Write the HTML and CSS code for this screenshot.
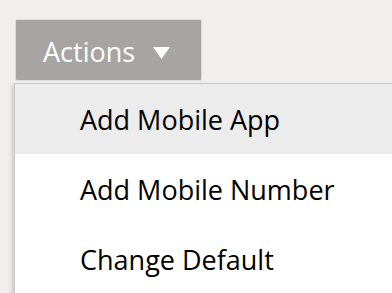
FILE: index.html
```html
<!DOCTYPE html>
<html lang="en">
<head>
    <meta charset="UTF-8">
    <meta name="viewport" content="width=device-width, initial-scale=1.0">
    <title>Actions</title>
    <link rel="stylesheet" href="styles.css">
</head>
<body>

<div class="dropdown">
    <button class="actions-btn">
        Actions
        <svg class="caret" width="17" height="12" viewBox="0 0 17 12"><polygon points="0,0 17,0 8.5,12" fill="#fff"/></svg>
    </button>

    <!-- open menu -->
    <ul class="menu">
        <li class="active">Add Mobile App</li>
        <li>Add Mobile Number</li>
        <li>Change Default</li>
    </ul>
</div>

</body>
</html>
```
FILE: styles.css
```css
body {
    margin: 0;
    padding: 0;
    background-color: #f0efed;
    font-family: 'Open Sans', 'Noto Sans', sans-serif;
    height: 293px;
    overflow: hidden;
}

.dropdown {
    position: relative;
    padding: 19px 0 0 15px;
}

.actions-btn {
    display: flex;
    align-items: center;
    gap: 18px;
    width: 187px;
    height: 62px;
    padding: 2px 0 0 27px;
    border: 1px solid #dddcda;
    border-radius: 2px;
    background-color: #a6a5a3;
    color: #fff;
    font-family: inherit;
    font-size: 27px;
    box-sizing: border-box;
}

.caret {
    margin-top: 4px;
}

.menu {
    position: absolute;
    top: 83px;
    left: 14px;
    right: 0;
    margin: 0;
    padding: 0;
    list-style: none;
    background-color: #fff;
    border: 1px solid #c9c9c9;
    border-right: none;
    box-shadow: -2px 2px 4px rgba(0, 0, 0, 0.15);
}

.menu li {
    height: 70px;
    line-height: 72px;
    padding-left: 65px;
    font-size: 27px;
    color: #000;
}

.menu li.active {
    background-color: #ececec;
}
```
